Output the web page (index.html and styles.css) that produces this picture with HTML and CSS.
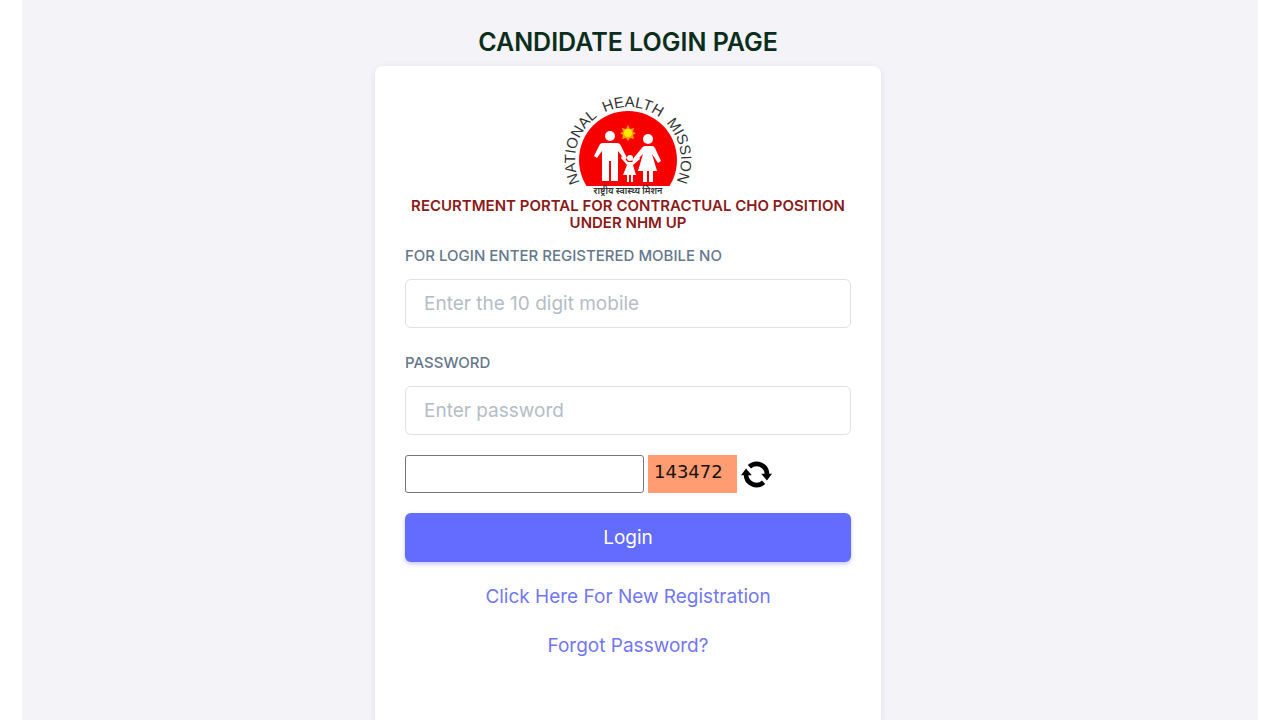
FILE: index.html
```html
<!DOCTYPE html>
<html lang="en">
<head>
	<meta charset="utf-8">
	<meta name="viewport" content="width=device-width, initial-scale=1">
	<title>Candidate Login Page</title>
	<link rel="stylesheet" href="styles.css">
</head>
<body>
<main class="page">
    <h1 class="page-title">CANDIDATE LOGIN PAGE</h1>

    <form class="card">
        <!-- mission logo: the name runs along a ring around the red disc -->
        <svg class="logo" viewBox="0 0 136 105" width="136" height="105" role="img" aria-label="National Health Mission">
            <defs>
                <path id="ring" d="M 68 121 a 53 53 0 0 1 0 -106 a 53 53 0 0 1 0 106"></path>
                <clipPath id="disc">
                    <rect x="0" y="0" width="136" height="94"></rect>
                </clipPath>
            </defs>
            <g class="logo-name">
                <text><textPath href="#ring" startOffset="97">NATIONAL</textPath></text>
                <text><textPath href="#ring" startOffset="171">HEALTH</textPath></text>
                <text><textPath href="#ring" startOffset="240">MISSION</textPath></text>
            </g>
            <circle clip-path="url(#disc)" fill="#f90000" cx="68" cy="68" r="49"></circle>
            <!-- sun -->
            <path fill="#f8a000" d="M 68 33 l 2 4 l 4 -1 l -1 4 l 3 1 l -3 2 l 1 4 l -4 -1 l -2 3 l -2 -3 l -4 1 l 1 -4 l -3 -2 l 3 -1 l -1 -4 l 4 1 z"></path>
            <circle fill="#ffe800" cx="68" cy="41" r="4"></circle>
            <!-- father, mother and child -->
            <g fill="#fff">
                <circle cx="50" cy="44" r="5"></circle>
                <path d="M 43 51 h 14 q 3 0 4 3 l 6 12 l -2 2 l -7 -9 v 30 h -7 v -20 h -2 v 20 h -7 v -30 l -5 7 l -3 -2 l 5 -10 q 1 -3 4 -3 z"></path>
                <circle cx="88" cy="47" r="5"></circle>
                <path d="M 85 54 h 7 q 2 0 3 2 l 6 13 l -3 2 l -6 -9 l 5 17 h -4 v 11 h -4 v -11 h -2 v 11 h -4 v -11 h -5 l 5 -17 l -9 9 l -2 -3 l 9 -11 q 2 -3 4 -3 z"></path>
                <circle cx="70" cy="66" r="3"></circle>
                <path d="M 62 64 l 6 6 h 4 l 7 -5 l 1 2 l -7 6 l 3 10 h -3 v 7 h -2 v -7 h -2 v 7 h -2 v -7 h -4 l 4 -10 l -6 -7 z"></path>
            </g>
            <text class="logo-hindi" x="68" y="102">राष्ट्रीय स्वास्थ्य मिशन</text>
        </svg>

        <h2 class="portal-name">RECURTMENT PORTAL FOR CONTRACTUAL CHO POSITION UNDER NHM UP</h2>

        <div class="field">
            <label for="mobile">FOR LOGIN ENTER REGISTERED MOBILE NO</label>
            <input id="mobile" type="tel" maxlength="10" placeholder="Enter the 10 digit mobile">
        </div>
        <div class="field">
            <label for="password">PASSWORD</label>
            <input id="password" type="password" placeholder="Enter password">
        </div>

        <div class="captcha">
            <input class="captcha-input" type="text" aria-label="Captcha">
            <span class="captcha-code">143472</span>
            <button class="captcha-refresh" type="button" aria-label="Refresh captcha">
                <svg viewBox="0 0 92 80" width="31" height="27">
                    <g fill="none" stroke="#000" stroke-width="14">
                        <path d="M 25 17 A 31 31 0 0 1 77 42"></path>
                        <path d="M 67 63 A 31 31 0 0 1 15 40"></path>
                    </g>
                    <path d="M 60 38 h 32 l -15 20 z"></path>
                    <path d="M 0 42 h 32 l -17 -20 z"></path>
                </svg>
            </button>
        </div>

        <button class="login" type="submit">Login</button>

        <nav class="links">
            <a href="#">Click Here For New Registration</a>
            <a href="#">Forgot Password?</a>
        </nav>
    </form>
</main>
</body>
</html>
```
FILE: styles.css
```css
* {
  box-sizing: border-box;
  padding: 0;
  margin: 0;
}
body {
  background: #fff;
  font-family: "Inter", "Liberation Sans", sans-serif;
}
/* grey sheet with a white margin on both sides, the content sits slightly to the left */
.page {
  min-height: 100vh;
  margin: 0 22px;
  padding: 24px 24px 0 0;
  background: #f3f3f8;
  display: flex;
  flex-direction: column;
  align-items: center;
}
.page-title {
  margin-bottom: 6px;
  font-size: 25px;
  line-height: 36px;
  font-weight: 600;
  color: #0b2e1c;
}
.card {
  flex: 1;
  width: 100%;
  max-width: 506px;
  padding: 26px 30px;
  background: #fff;
  border-radius: 8px 8px 0 0;
  box-shadow: 0 2px 6px rgba(67, 89, 113, 0.12);
  display: flex;
  flex-direction: column;
}

.logo {
  align-self: center;
  display: block;
  overflow: visible;
}
.logo-name {
  font-family: "Liberation Sans", sans-serif;
  font-size: 15px;
  fill: #333;
  text-anchor: middle;
}
.logo-hindi {
  font-family: "Noto Sans", sans-serif;
  font-size: 9px;
  font-weight: 600;
  fill: #333;
  text-anchor: middle;
}
.portal-name {
  margin-bottom: 15px;
  font-size: 15px;
  line-height: 17px;
  font-weight: 600;
  text-align: center;
  color: #8b1a1a;
}

.field {
  margin-bottom: 25px;
}
.field + .field {
  margin-bottom: 20px;
}
.field label {
  display: block;
  margin-bottom: 13px;
  font-size: 15px;
  line-height: 20px;
  font-weight: 500;
  color: #66788c;
}
.field input {
  display: block;
  width: 100%;
  height: 49px;
  padding: 0 18px;
  border: 1px solid #dfe1e5;
  border-radius: 6px;
  font: inherit;
  font-size: 19px;
  color: #435971;
}
.field input::placeholder {
  color: #b4bdc6;
}

.captcha {
  margin-bottom: 20px;
  display: flex;
  align-items: center;
  gap: 4px;
}
.captcha-input {
  width: 239px;
  height: 38px;
  padding: 0 8px;
  border: 1px solid #767676;
  border-radius: 3px;
  font: inherit;
}
.captcha-code {
  padding: 0 14px 4px 6px;
  background: #ff9c72;
  font-family: "DejaVu Sans", sans-serif;
  font-size: 18px;
  line-height: 34px;
  color: #201010;
}
.captcha-refresh {
  border: none;
  background: none;
}
.captcha-refresh svg {
  display: block;
}

.login {
  height: 49px;
  margin-bottom: 20px;
  border: none;
  border-radius: 6px;
  background: #646bff;
  box-shadow: 0 2px 4px rgba(105, 108, 255, 0.4);
  font: inherit;
  font-size: 19px;
  color: #fff;
}
.links {
  display: flex;
  flex-direction: column;
  align-items: center;
  gap: 20px;
}
.links a {
  font-size: 19px;
  line-height: 29px;
  color: #7377f0;
  text-decoration: none;
}
```
